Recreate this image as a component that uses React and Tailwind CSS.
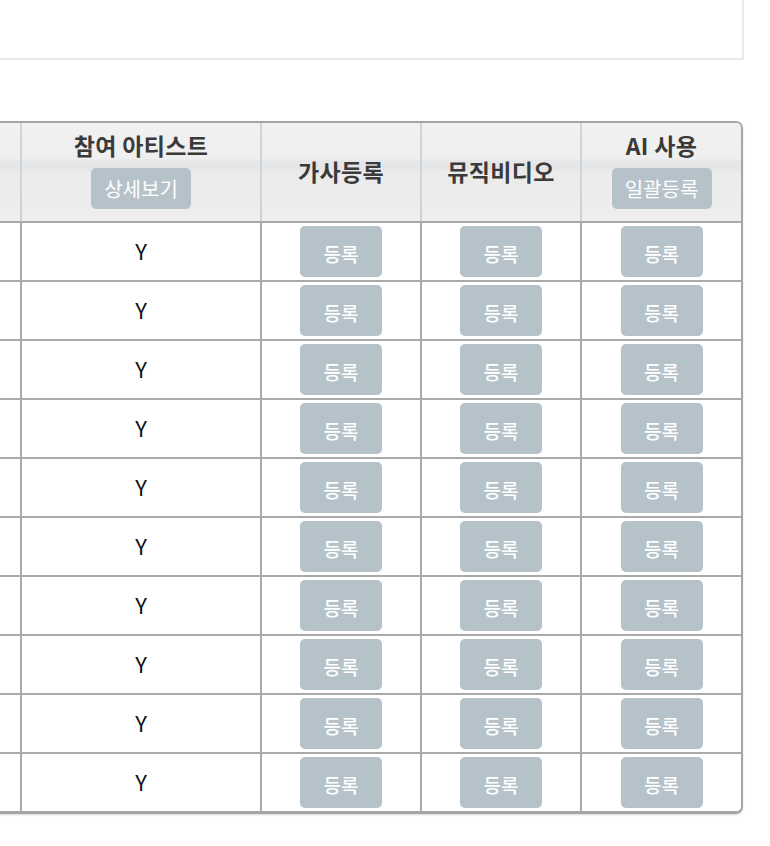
import React from "react";

const font = { fontFamily: '"Noto Sans CJK KR", "Noto Sans", sans-serif' };

function Btn({ children, className = "" }) {
  return (
    <div
      className={
        "flex items-center justify-center rounded-[5px] bg-[#b6c2ca] text-white " +
        className
      }
    >
      {children}
    </div>
  );
}

function RegBtn() {
  return (
    <Btn className="h-[51px] w-[82px] pt-[3px] text-[19px] font-medium leading-none">등록</Btn>
  );
}

const headBg =
  "bg-[linear-gradient(180deg,#f1f1f1_0%,#efefef_36%,#e6e8ea_38%,#e3e5e7_46%,#ebebeb_50%,#eeeeee_100%)]";

const headText = "text-[23px] font-bold text-[#3a3a3a] tracking-[0.3px]";

export default function App() {
  const rows = Array.from({ length: 10 });
  return (
    <div className="min-h-[846px] w-[770px] overflow-hidden bg-white" style={font}>
      <div className="h-[60px] w-[744px] border-b-2 border-r-2 border-[#e8e8e8] bg-white" />
      <div className="ml-[-100px] mt-[61px] w-[843px] overflow-hidden rounded-[7px] border-2 border-b-[3px] border-[#a6a6a6] shadow-[0_1px_2px_rgba(0,0,0,0.15)]">
        {/* header */}
        <div className={"grid h-[98px] grid-cols-[120px_240px_160px_160px_159px] " + headBg}>
          <div className="border-r-2 border-[#cfd4d8]" />
          <div className="flex flex-col items-center border-r-2 border-[#cfd4d8] pt-[5px]">
            <div className={headText + " leading-[34px]"}>참여 아티스트</div>
            <Btn className="mt-[6px] h-[41px] w-[100px] text-[20px] leading-none">상세보기</Btn>
          </div>
          <div className={"flex items-center justify-center border-r-2 border-[#cfd4d8] pb-[2px] " + headText}>
            가사등록
          </div>
          <div className={"flex items-center justify-center border-r-2 border-[#cfd4d8] pb-[2px] " + headText}>
            뮤직비디오
          </div>
          <div className="flex flex-col items-center pt-[5px]">
            <div className={headText + " leading-[34px]"}>AI 사용</div>
            <Btn className="mt-[6px] h-[41px] w-[100px] text-[20px] leading-none">일괄등록</Btn>
          </div>
        </div>
        {rows.map((_, i) => (
          <div
            key={i}
            className="grid h-[59px] grid-cols-[120px_240px_160px_160px_159px] border-t-2 border-[#aaaaaa] bg-white"
          >
            <div className="border-r-2 border-[#aaaaaa]" />
            <div className="flex items-center justify-center border-r-2 border-[#aaaaaa] pb-[3px] text-[22px] text-[#111]">
              Y
            </div>
            <div className="flex items-center justify-center border-r-2 border-[#aaaaaa]">
              <RegBtn />
            </div>
            <div className="flex items-center justify-center border-r-2 border-[#aaaaaa]">
              <RegBtn />
            </div>
            <div className="flex items-center justify-center">
              <RegBtn />
            </div>
          </div>
        ))}
      </div>
    </div>
  );
}
